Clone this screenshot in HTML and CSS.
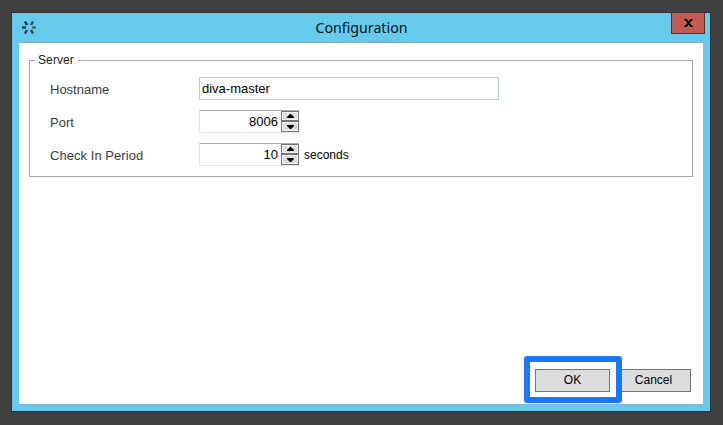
FILE: index.html
```html
<!DOCTYPE html>
<html lang="en">
<head>
<meta charset="utf-8">
<title>Configuration</title>
<link rel="stylesheet" href="styles.css">
</head>
<body>
<main class="window">
  <header class="titlebar">
    <svg class="app-icon" viewBox="0 0 14 13" aria-hidden="true">
      <g fill="none" stroke-width="2.5">
        <path d="M3 .5 5 4" stroke="#172d35"/>
        <path d="M11 .5 9 4" stroke="#1453a0"/>
        <path d="M0 6.5h4" stroke="#29434e"/>
        <path d="M10 6.5h4" stroke="#4d626c"/>
        <path d="M3 12.5 5 9" stroke="#35444b"/>
        <path d="M11 12.5 9 9" stroke="#35444b"/>
      </g>
    </svg>
    <h1 class="title">Configuration</h1>
    <button class="close" aria-label="Close">
      <svg viewBox="0 0 9 8"><path d="M0 0h3v1h1v1h1V1h1V0h3v1H8v1H7v1H6v2h1v1h1v1h1v1H6V7H5V6H4v1H3v1H0V7h1V6h1V5h1V3H2V2H1V1H0z"/></svg>
    </button>
  </header>
  <section class="client">
    <fieldset class="group">
      <legend>Server</legend>
      <div class="row"><label>Hostname</label><div class="textbox">diva-master</div></div>
      <div class="row"><label>Port</label>
        <div class="number"><span>8006</span>
          <div class="spin"><button><svg viewBox="0 0 7 4"><path d="M3 0h1l3 3v1H0V3z"/></svg></button><button><svg viewBox="0 0 7 4"><path d="M0 0h7v1L4 4H3L0 1z"/></svg></button></div>
        </div>
      </div>
      <div class="row"><label class="period">Check In Period</label>
        <div class="number"><span>10</span>
          <div class="spin"><button><svg viewBox="0 0 7 4"><path d="M3 0h1l3 3v1H0V3z"/></svg></button><button><svg viewBox="0 0 7 4"><path d="M0 0h7v1L4 4H3L0 1z"/></svg></button></div>
        </div>
        <span class="unit">seconds</span>
      </div>
    </fieldset>
    <footer class="actions">
      <div class="highlight"><button class="button">OK</button></div>
      <button class="button cancel">Cancel</button>
    </footer>
  </section>
</main>
</body>
</html>
```
FILE: styles.css
```css
* { box-sizing: border-box; }
body {
  margin: 0;
  height: 425px;
  padding: 12px 12px 13px 11px;
  background: #404040;
  font-family: "Liberation Sans", Arial, sans-serif;
  font-size: 12px;
  color: #000;
  overflow: hidden;
}
button { margin: 0; padding: 0; font: inherit; color: inherit; border-radius: 0; }
svg { display: block; }
.window {
  display: flex;
  flex-direction: column;
  width: 700px;
  height: 400px;
  padding: 0 7px 6px;
  border: 1px solid #2c3337;
  background: #66caea;
}
.titlebar {
  display: grid;
  grid-template-columns: 34px 1fr 34px;
  flex: 0 0 29px;
  align-items: start;
  margin-right: -2px;
}
.app-icon { width: 14px; height: 13px; margin: 8px 0 0 3px; }
.title {
  margin: 4px 0 0;
  padding-right: 1px;
  font: 400 14.2px/22px "Noto Sans", "Open Sans", sans-serif;
  text-align: center;
  color: #08151c;
}
.close {
  display: grid;
  place-items: center;
  width: 34px;
  height: 22px;
  margin-top: -1px;
  border: 1px solid #4b3539;
  background: #c35b52;
}
.close svg { width: 9px; height: 8px; }
.client {
  display: flex;
  flex-direction: column;
  flex: 1;
  padding: 10px 10px 0;
  border-top: 1px solid #7fafc1;
  border-bottom: 1px solid #7fb9cf;
  background: #fff;
}
.group {
  height: 124px;
  margin: 0;
  padding: 10px 0 0 20px;
  border: 1px solid #a4a4a4;
}
.group legend { margin-left: -15px; padding: 0 4px 0 3px; line-height: 14px; color: #222; letter-spacing: .1px; }
.row { display: flex; height: 23px; margin-bottom: 10px; }
.row label { width: 149px; font-size: 13px; line-height: 25px; color: #3c3c3c; }
.row .period { letter-spacing: .05px; }
.textbox {
  width: 300px;
  padding-left: 2px;
  border: 1px solid #b3cbe3;
  font-size: 13px;
  line-height: 21px;
}
.number {
  display: flex;
  width: 100px;
  border: 1px solid #e3e6ee;
  border-top-color: #acacac;
  border-right: 0;
  font-size: 13px;
  line-height: 21px;
}
.number span { flex: 1; padding-right: 3px; text-align: right; }
.spin { display: grid; grid-template-rows: 10px 11px; width: 18px; height: 21px; }
.spin button {
  display: grid;
  place-items: center;
  border: 1px solid #777;
  background: #ddd;
  box-shadow: inset 0 0 0 1px #f5f5f5;
}
.spin svg { width: 7px; height: 4px; }
.unit { margin-left: 5px; line-height: 24px; }
.actions { display: flex; align-items: flex-start; justify-content: flex-end; margin: auto 1px 1px 0; }
.highlight {
  z-index: 1;
  width: 98px;
  height: 47px;
  padding: 7px 6px 0 5px;
  border: 6px solid #1877fb;
  border-radius: 3px;
  background: #fff;
}
.button { display: block; width: 75px; height: 23px; border: 1px solid #747474; background: #ddd; line-height: 21px; }
.cancel { margin: 13px 1px 0 -6px; }
```
